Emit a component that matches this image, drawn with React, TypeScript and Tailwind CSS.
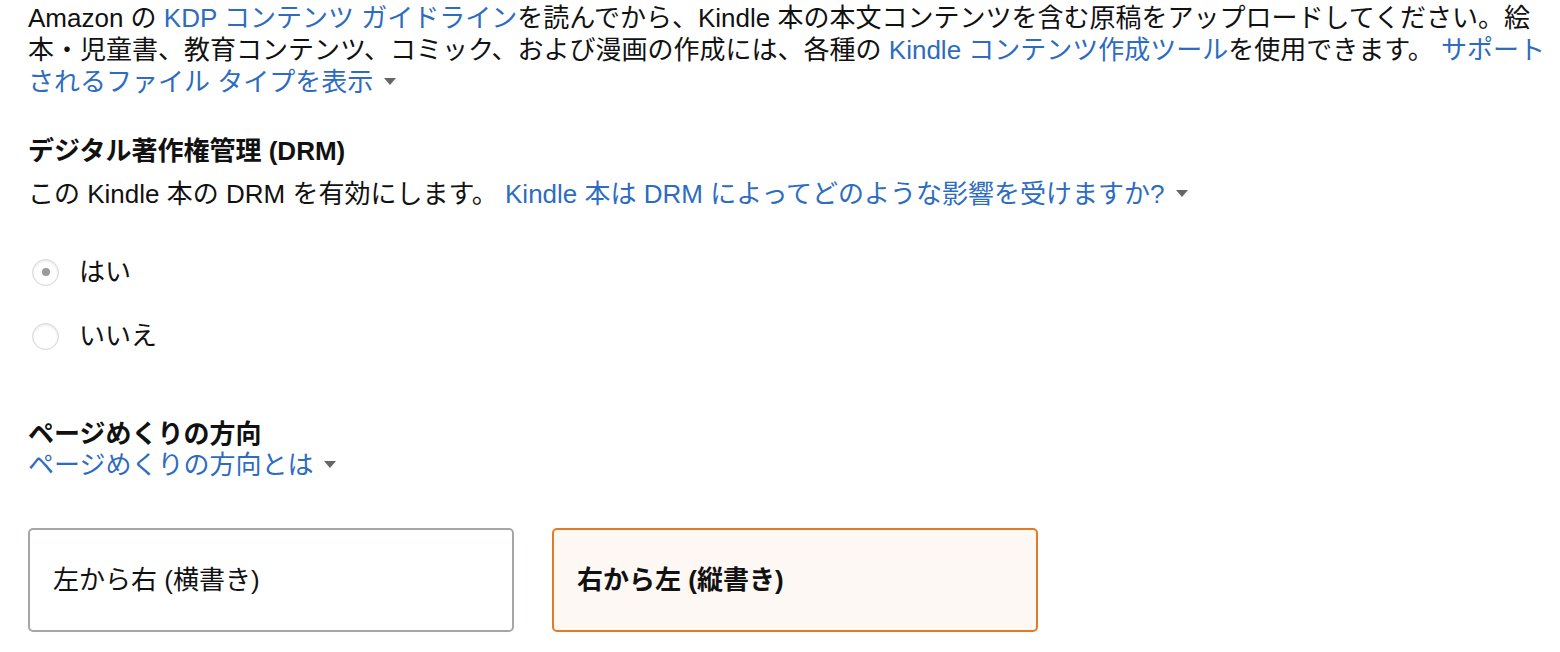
import React, { useState } from 'react';

const font = { fontFamily: '"Liberation Sans", Arial, "Noto Sans CJK JP", sans-serif' };

const Caret: React.FC = () => (
    <span className="inline-block align-middle ml-[11px] mb-[5px] w-0 h-0 border-l-[6px] border-r-[6px] border-t-[7px] border-l-transparent border-r-transparent border-t-[#666666]" />
);

const Link: React.FC<{ children: React.ReactNode; caret?: boolean }> = ({ children, caret }) => (
    <a href="#" className="text-[#2d6cc0] no-underline">
        {children}
        {caret && <Caret />}
    </a>
);

interface RadioProps {
    label: string;
    checked: boolean;
    onSelect: () => void;
}

const Radio: React.FC<RadioProps> = ({ label, checked, onSelect }) => (
    <label className="flex items-center h-[32px] cursor-pointer" onClick={onSelect}>
        <span className="ml-[4px] w-[27px] h-[27px] rounded-full border border-[#d6d6d6] bg-white shadow-[inset_0_1px_3px_rgba(0,0,0,0.12)] flex items-center justify-center">
            {checked && <span className="w-[8px] h-[8px] rounded-full bg-[#9a9a9a]" />}
        </span>
        <span className="ml-[20px]">{label}</span>
    </label>
);

const App: React.FC = () => {
    const [drm, setDrm] = useState<'yes' | 'no'>('yes');
    const [direction, setDirection] = useState<'ltr' | 'rtl'>('rtl');

    const boxClass = (active: boolean) =>
        active
            ? 'w-[486px] h-[104px] rounded-[5px] border-2 border-[#e07b27] bg-[#fdf8f4] flex items-center pl-[23px] font-bold text-left'
            : 'w-[486px] h-[104px] rounded-[5px] border-2 border-[#a3a7ab] bg-white flex items-center pl-[23px] text-left';

    return (
        <div className="min-h-screen bg-white text-[#111111] text-[26px] leading-[32px] pl-[28px] pr-[14px] pt-[2px]" style={font}>
            <p>
                Amazon の <Link>KDP コンテンツ ガイドライン</Link>を読んでから、Kindle 本の本文コンテンツを含む原稿をアップロードしてください。絵本・児童書、教育コンテンツ、コミック、および漫画の作成には、各種の <Link>Kindle コンテンツ作成ツール</Link>を使用できます。 <Link caret>サポートされるファイル タイプを表示</Link>
            </p>

            <h2 className="mt-[37px] font-bold">デジタル著作権管理 (DRM)</h2>
            <p className="mt-[11px]">
                この Kindle 本の DRM を有効にします。 <Link caret>Kindle 本は DRM によってどのような影響を受けますか?</Link>
            </p>

            <div className="mt-[46px] flex flex-col gap-[32px]">
                <Radio label="はい" checked={drm === 'yes'} onSelect={() => setDrm('yes')} />
                <Radio label="いいえ" checked={drm === 'no'} onSelect={() => setDrm('no')} />
            </div>

            <h2 className="mt-[67px] font-bold leading-[31px]">ページめくりの方向</h2>
            <p className="leading-[31px]">
                <Link caret>ページめくりの方向とは</Link>
            </p>

            <div className="mt-[47px] flex gap-[38px]">
                <button className={boxClass(direction === 'ltr')} onClick={() => setDirection('ltr')}>
                    左から右 (横書き)
                </button>
                <button className={boxClass(direction === 'rtl')} onClick={() => setDirection('rtl')}>
                    右から左 (縦書き)
                </button>
            </div>
        </div>
    );
};

export default App;
